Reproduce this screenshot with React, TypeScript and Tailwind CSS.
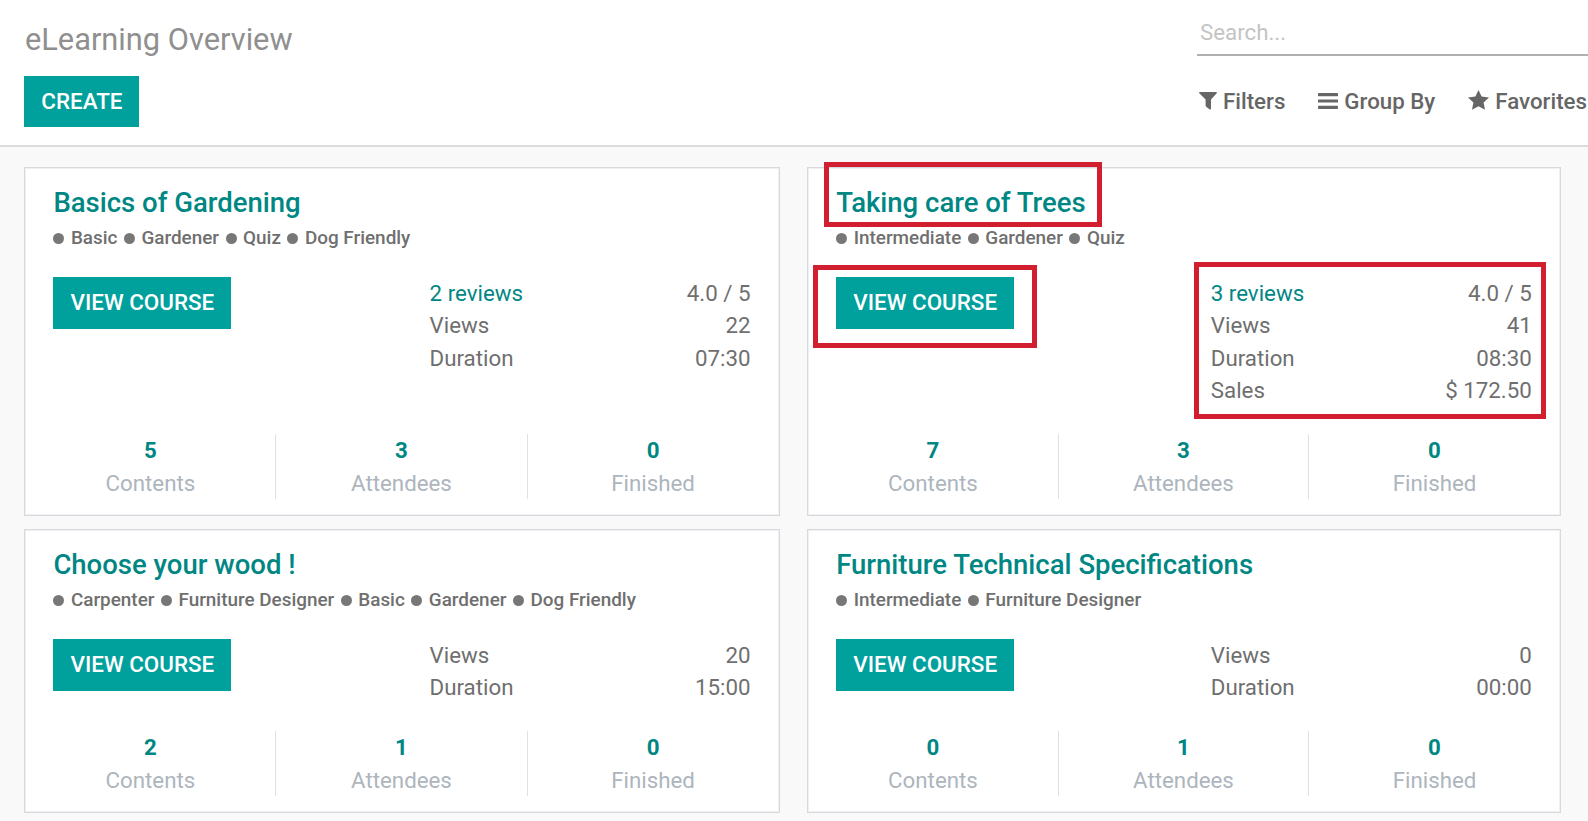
import { Fragment } from "react";

type Course = {
  title: string;
  tags: string[];
  reviews?: string;
  stats: [string, string][];
  counts: [number, number, number];
  highlighted?: boolean;
};

const courses: Course[] = [
  {
    title: "Basics of Gardening",
    tags: ["Basic", "Gardener", "Quiz", "Dog Friendly"],
    reviews: "2 reviews",
    stats: [["Views", "22"], ["Duration", "07:30"]],
    counts: [5, 3, 0],
  },
  {
    title: "Taking care of Trees",
    tags: ["Intermediate", "Gardener", "Quiz"],
    reviews: "3 reviews",
    stats: [["Views", "41"], ["Duration", "08:30"], ["Sales", "$ 172.50"]],
    counts: [7, 3, 0],
    highlighted: true,
  },
  {
    title: "Choose your wood !",
    tags: ["Carpenter", "Furniture Designer", "Basic", "Gardener", "Dog Friendly"],
    stats: [["Views", "20"], ["Duration", "15:00"]],
    counts: [2, 1, 0],
  },
  {
    title: "Furniture Technical Specifications",
    tags: ["Intermediate", "Furniture Designer"],
    stats: [["Views", "0"], ["Duration", "00:00"]],
    counts: [0, 1, 0],
  },
];

const countLabels = ["Contents", "Attendees", "Finished"];

function FilterIcon() {
  return (
    <svg className="mr-[6px] h-[18px] w-[18px]" viewBox="0 0 18 18" fill="currentColor">
      <path d="M.8 0h16.400c.7 0 1 .8.5 1.300L12 7.500v9.300c0 .7-.8 1-1.300.6L6.900 14.400a.9.9 0 0 1-.3-.6V7.500L.3 1.300C-.2.8.1 0 .8 0z" />
    </svg>
  );
}

function BarsIcon() {
  return (
    <svg className="mr-[6px] h-[16px] w-[20px]" viewBox="0 0 20 16" fill="currentColor">
      <rect x="0" y="0" width="20" height="3.200" rx="0.700" />
      <rect x="0" y="6.400" width="20" height="3.200" rx="0.700" />
      <rect x="0" y="12.800" width="20" height="3.200" rx="0.700" />
    </svg>
  );
}

function StarIcon() {
  return (
    <svg className="mr-[6px] mb-[2px] h-[20px] w-[21px]" viewBox="0 0 21 20" fill="currentColor">
      <path d="M10.500 0l3.100 6.500 7.400 1-5.400 5 1.400 7.300-6.500-3.600L4 19.800l1.400-7.300L0 7.500l7.400-1z" />
    </svg>
  );
}

function CourseCard({ course }: { course: Course }) {
  return (
    <article className="flex flex-col border border-[#d6dade] bg-white pt-[18px] pb-[16px] shadow-[inset_0_0_0_1px_#eff0f2]">
      <div className="px-[28px]">
        <div className="flex">
          <h2 className="relative pt-px text-[27.5px] leading-[32px] font-medium whitespace-nowrap text-[#008784]">
            {course.title}
            {course.highlighted && (
              <span className="absolute -top-[24px] -left-[12px] h-[65px] w-[278px] border-[5px] border-[#d11f2f]" />
            )}
          </h2>
        </div>
        <div className="mt-[5px] flex items-center text-[18.9px] leading-[27.5px] font-medium whitespace-nowrap text-[#6f6f6f]">
          {course.tags.map((tag) => (
            <Fragment key={tag}>
              <span className="mt-[2px] mr-[6.5px] h-[11px] w-[11px] rounded-full bg-[#777]" />
              <span className="mr-[6.5px]">{tag}</span>
            </Fragment>
          ))}
        </div>
        <div className="mt-[25px] flex items-start justify-between">
          <button className="relative h-[52px] w-[178px] bg-[#00a09d] pb-px text-[22.4px] leading-[51px] font-medium whitespace-nowrap text-white">
            VIEW COURSE
            {course.highlighted && (
              <span className="absolute -top-[12px] -left-[23px] h-[83px] w-[224px] border-[5px] border-[#d11f2f]" />
            )}
          </button>
          <div className="relative w-[321px]">
            {course.reviews && (
              <div className="flex justify-between">
                <span className="text-[#008784]">{course.reviews}</span>
                <span>4.0 / 5</span>
              </div>
            )}
            {course.stats.map(([label, value]) => (
              <div key={label} className="flex justify-between">
                <span>{label}</span>
                <span>{value}</span>
              </div>
            ))}
            {course.highlighted && (
              <div className="absolute -top-[15px] -left-[17px] h-[157px] w-[352px] border-[5px] border-[#d11f2f]" />
            )}
          </div>
        </div>
      </div>
      <div className="mt-auto grid grid-cols-3 divide-x divide-[#dee2e6] pt-[27.500px] text-center">
        {course.counts.map((count, i) => (
          <div key={countLabels[i]}>
            <div className="font-bold text-[#008784]">{count}</div>
            <div className="text-[#adb5bd]">{countLabels[i]}</div>
          </div>
        ))}
      </div>
    </article>
  );
}

export default function App() {
  return (
    <div className="h-[821px] w-[1588px] overflow-hidden bg-[#f9f9f9] font-[Roboto,sans-serif] text-[22.3px] leading-[32.5px] text-[#6f6f6f]">
      <header className="flex h-[147px] justify-between border-b-2 border-[#dcdcdc] bg-white pl-[24.400px]">
        <div>
          <h1 className="mt-[19px] pt-px pl-[0.500px] text-[30.8px] leading-[40px] text-[#8f8f8f]">eLearning Overview</h1>
          <button className="mt-[16px] block h-[51px] w-[115px] bg-[#00a09d] text-[22.4px] leading-[51px] font-medium text-white">
            CREATE
          </button>
        </div>
        <div className="w-[391px]">
          <div className="mt-[16px] h-[40px] border-b-2 border-[#b0b0b0] pl-[3px] text-[#c4c4c4]">Search...</div>
          <nav className="mt-[29px] flex items-center justify-between pr-[1px] pl-[2px] font-medium whitespace-nowrap text-[#666]">
            <span className="flex items-center"><FilterIcon />Filters</span>
            <span className="flex items-center"><BarsIcon />Group By</span>
            <span className="flex items-center"><StarIcon />Favorites</span>
          </nav>
        </div>
      </header>
      <main className="grid grid-cols-[755.200px_753.600px] gap-x-[27.600px] gap-y-[13px] pt-[20px] pl-[24.400px]">
        {courses.map((course) => (
          <CourseCard key={course.title} course={course} />
        ))}
      </main>
    </div>
  );
}
